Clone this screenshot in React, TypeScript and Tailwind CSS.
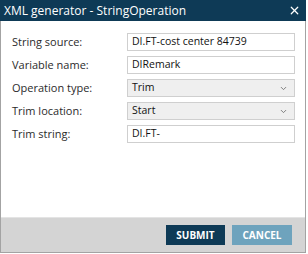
import { ChevronDown, X } from "lucide-react";

const FIELDS: { label: string; value: string; select?: boolean }[] = [
  { label: "String source:", value: "DI.FT-cost center 84739" },
  { label: "Variable name:", value: "DIRemark" },
  { label: "Operation type:", value: "Trim", select: true },
  { label: "Trim location:", value: "Start", select: true },
  { label: "Trim string:", value: "DI.FT-" },
];

export default function App() {
  return (
    <div className="w-[308px] h-[254px] bg-white" style={{ fontFamily: '"Open Sans", sans-serif' }}>
      <div className="w-[306px] h-[253px] flex flex-col border-x border-b border-[#a3a3a3] bg-white">
        {/* Title bar */}
        <div className="h-[21px] -mx-px flex items-center justify-between bg-[#0e3a56] pl-[4px] pr-[5px] text-white">
          <span className="text-[12px] leading-none">XML generator - StringOperation</span>
          <X size={13} strokeWidth={2.2} />
        </div>

        {/* Form */}
        <div className="flex-1 flex flex-col gap-[5px] pt-[12px] pl-[11px] pr-[10px]">
          {FIELDS.map((f) => (
            <div key={f.label} className="flex items-center">
              <label className="w-[115px] shrink-0 text-[11px] text-[#2b2b2b]">{f.label}</label>
              {f.select ? (
                <div className="flex-1 h-[18px] flex items-center justify-between border border-[#cfcfcf] bg-[#efefef] pl-[4px] pr-[6px] text-[10.5px] text-[#111]">
                  <span>{f.value}</span>
                  <ChevronDown size={9} strokeWidth={2.5} className="text-[#777]" />
                </div>
              ) : (
                <div className="flex-1 h-[18px] flex items-center border border-[#cfcfcf] bg-white pl-[4px] text-[10.5px] text-[#111]">
                  {f.value}
                </div>
              )}
            </div>
          ))}
        </div>

        {/* Footer */}
        <div className="h-[35px] flex items-center justify-end gap-[7px] border-t border-[#e4e4e4] bg-[#d4d4d4] pr-[13px]">
          <button className="w-[59px] h-[20px] bg-[#0e3a56] text-white text-[10px] font-bold">SUBMIT</button>
          <button className="w-[60px] h-[20px] bg-[#6ea3bd] text-white text-[10px] font-bold">CANCEL</button>
        </div>
      </div>
    </div>
  );
}
